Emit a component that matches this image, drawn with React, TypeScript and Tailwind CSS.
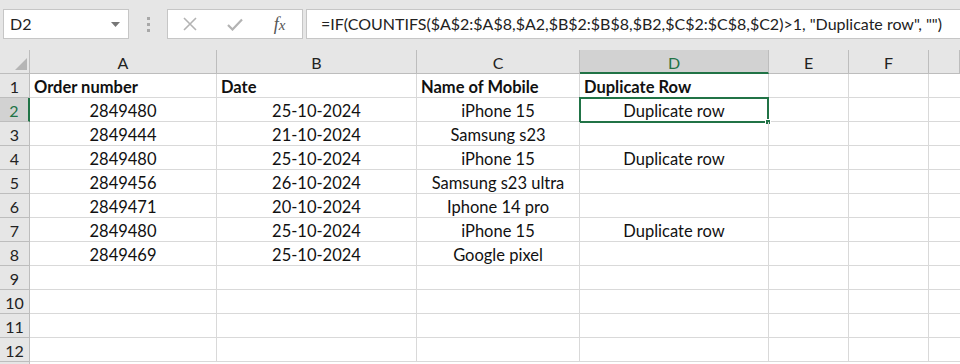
import React from "react";

const COLS: string[] = ["A", "B", "C", "D", "E", "F", ""];

type Row = [string, string, string, string];

const DATA: Row[] = [
  ["2849480", "25-10-2024", "iPhone 15", "Duplicate row"],
  ["2849444", "21-10-2024", "Samsung s23", ""],
  ["2849480", "25-10-2024", "iPhone 15", "Duplicate row"],
  ["2849456", "26-10-2024", "Samsung s23 ultra", ""],
  ["2849471", "20-10-2024", "Iphone 14 pro", ""],
  ["2849480", "25-10-2024", "iPhone 15", "Duplicate row"],
  ["2849469", "25-10-2024", "Google pixel", ""],
];

const HEADINGS: string[] = ["Order number", "Date", "Name of Mobile", "Duplicate Row"];

function FormulaBar() {
  return (
    <div className="h-[50px] bg-[#e6e6e6] flex items-start pt-[9px] pl-[3px]">
      <div className="w-[126px] h-[30px] bg-white border border-[#c6c6c6] flex items-center pl-[6px] pr-[8px] justify-between">
        <span className="text-[16px] text-[#222]">D2</span>
        <svg width="9" height="5" viewBox="0 0 9 5">
          <path d="M0 0 L9 0 L4.5 5 Z" fill="#777" />
        </svg>
      </div>
      <div className="w-[38px] h-[30px] flex flex-col items-center justify-center gap-[3px]">
        <div className="w-[3px] h-[3px] bg-[#a8a8a8]" />
        <div className="w-[3px] h-[3px] bg-[#a8a8a8]" />
        <div className="w-[3px] h-[3px] bg-[#a8a8a8]" />
      </div>
      <div className="w-[136px] h-[30px] bg-white border border-[#c6c6c6] flex items-center">
        <div className="w-[45px] flex justify-center">
          <svg width="14" height="14" viewBox="0 0 14 14">
            <path d="M1 1 L13 13 M13 1 L1 13" stroke="#b3b3b3" strokeWidth="1.6" />
          </svg>
        </div>
        <div className="w-[45px] flex justify-center">
          <svg width="16" height="13" viewBox="0 0 16 13">
            <path d="M1 7 L5.5 11.5 L15 1.5" stroke="#b3b3b3" strokeWidth="2.2" fill="none" />
          </svg>
        </div>
        <div className="w-[45px] flex justify-center">
          <span className="italic text-[18px] text-[#555] font-['Liberation_Serif',serif] leading-none">
            f<span className="text-[15px]">x</span>
          </span>
        </div>
      </div>
      <div className="ml-[3px] flex-1 h-[30px] bg-white border border-[#c6c6c6] border-r-0 flex items-center pl-[14px]">
        <span className="text-[16px] text-[#222] whitespace-nowrap">
          =IF(COUNTIFS($A$2:$A$8,$A2,$B$2:$B$8,$B2,$C$2:$C$8,$C2)&gt;1, "Duplicate row", "")
        </span>
      </div>
    </div>
  );
}

export default function App() {
  const rows: string[][] = [HEADINGS, ...DATA];
  const emptyRows: number = 4;

  return (
    <div className="w-[960px] h-[364px] overflow-hidden bg-white font-['Lato',sans-serif] text-[#111]">
      <FormulaBar />
      <div className="grid grid-cols-[30px_187px_200px_163px_189px_80px_80px_31px] auto-rows-[24px]">
        {/* header row */}
        <div className="bg-[#e6e6e6] border-r border-b border-[#bdbdbd] relative">
          <svg className="absolute right-[2px] bottom-[3px]" width="12" height="12" viewBox="0 0 12 12">
            <path d="M12 0 L12 12 L0 12 Z" fill="#b5b5b5" />
          </svg>
        </div>
        {COLS.map((c, i) =>
          c === "D" ? (
            <div
              key={i}
              className="bg-[#d2d2d2] border-r border-[#bdbdbd] border-b-2 border-b-[#217346] flex items-center justify-center pt-[3px] text-[16px] text-[#217346]">
              {c}
            </div>
          ) : (
            <div
              key={i}
              className="bg-[#e6e6e6] border-r border-b border-[#bdbdbd] flex items-center justify-center pt-[3px] text-[16px] text-[#222]">
              {c}
            </div>
          )
        )}

        {rows.map((row, r) => {
          const isHead: boolean = r === 0;
          const rowNum: number = r + 1;
          return (
            <React.Fragment key={r}>
              {rowNum === 2 ? (
                <div className="bg-[#d2d2d2] border-b border-[#bdbdbd] border-r-2 border-r-[#217346] flex items-center justify-center pt-[3px] text-[16px] text-[#217346]">
                  {rowNum}
                </div>
              ) : (
                <div className="bg-[#e6e6e6] border-r border-b border-[#bdbdbd] flex items-center justify-center pt-[3px] text-[16px] text-[#222]">
                  {rowNum}
                </div>
              )}
              {row.map((v, c) => (
                <div
                  key={c}
                  className={
                    "relative border-r border-b border-[#d9d9d9] flex items-center pt-[3px] whitespace-nowrap " +
                    (isHead ? "font-bold text-[16.5px] pl-[4px]" : "text-[16.5px] justify-center")
                  }>
                  {v}
                  {rowNum === 2 && c === 3 && (
                    <div className="absolute -left-px -top-px w-[190px] h-[26px] border-2 border-[#217346]">
                      <div className="absolute -right-[4px] -bottom-[4px] w-[6px] h-[6px] bg-[#217346] border border-white" />
                    </div>
                  )}
                </div>
              ))}
              <div className="border-r border-b border-[#d9d9d9]" />
              <div className="border-r border-b border-[#d9d9d9]" />
              <div className="border-b border-[#d9d9d9]" />
            </React.Fragment>
          );
        })}

        {Array.from({ length: emptyRows }).map((_, i) => (
          <React.Fragment key={"e" + i}>
            <div className="bg-[#e6e6e6] border-r border-b border-[#bdbdbd] flex items-center justify-center pt-[3px] text-[16px] text-[#222]">
              {i + 9}
            </div>
            <div className="border-r border-b border-[#d9d9d9]" />
            <div className="border-r border-b border-[#d9d9d9]" />
            <div className="border-r border-b border-[#d9d9d9]" />
            <div className="border-r border-b border-[#d9d9d9]" />
            <div className="border-r border-b border-[#d9d9d9]" />
            <div className="border-r border-b border-[#d9d9d9]" />
            <div className="border-b border-[#d9d9d9]" />
          </React.Fragment>
        ))}
        <div className="bg-[#e6e6e6] border-r border-[#bdbdbd]" />
      </div>
    </div>
  );
}
